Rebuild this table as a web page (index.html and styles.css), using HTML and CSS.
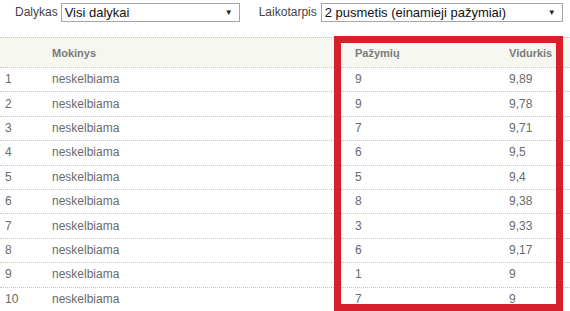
FILE: index.html
```html
<!DOCTYPE html>
<html>
<head>
<meta charset="utf-8">
<link rel="stylesheet" href="styles.css">
</head>
<body>
<div class="filters">
  <label class="flabel">Dalykas</label>
  <div class="select s1"><span>Visi dalykai</span><span class="arrow">▼</span></div>
  <label class="flabel second">Laikotarpis</label>
  <div class="select s2"><span>2 pusmetis (einamieji pažymiai)</span><span class="arrow">▼</span></div>
</div>
<div class="table">
  <div class="row head"><div></div><div>Mokinys</div><div>Pažymių</div><div>Vidurkis</div></div>
  <div class="row"><div>1</div><div>neskelbiama</div><div>9</div><div>9,89</div></div>
  <div class="row"><div>2</div><div>neskelbiama</div><div>9</div><div>9,78</div></div>
  <div class="row"><div>3</div><div>neskelbiama</div><div>7</div><div>9,71</div></div>
  <div class="row"><div>4</div><div>neskelbiama</div><div>6</div><div>9,5</div></div>
  <div class="row"><div>5</div><div>neskelbiama</div><div>5</div><div>9,4</div></div>
  <div class="row"><div>6</div><div>neskelbiama</div><div>8</div><div>9,38</div></div>
  <div class="row"><div>7</div><div>neskelbiama</div><div>3</div><div>9,33</div></div>
  <div class="row"><div>8</div><div>neskelbiama</div><div>6</div><div>9,17</div></div>
  <div class="row"><div>9</div><div>neskelbiama</div><div>1</div><div>9</div></div>
  <div class="row"><div>10</div><div>neskelbiama</div><div>7</div><div>9</div></div>
</div>
<div class="highlight"></div>
</body>
</html>
```
FILE: styles.css
```css
html, body {
  margin: 0;
  padding: 0;
  background: #fff;
  font-family: "Liberation Sans", Arial, sans-serif;
  overflow: hidden;
}
.filters {
  display: flex;
  align-items: center;
  height: 22px;
  padding: 1px 0 0 15px;
}
.flabel {
  font-size: 12px;
  color: #444;
  margin-right: 3px;
}
.flabel.second {
  margin-left: 19px;
  margin-right: 4px;
}
.select {
  box-sizing: border-box;
  height: 19px;
  border: 1px solid #a6a6a6;
  display: flex;
  align-items: center;
  justify-content: space-between;
  padding: 0 6px 0 3px;
  font-size: 13px;
  color: #111;
  background: #fff;
}
.s1 { width: 179px; }
.s2 { width: 242px; }
.arrow {
  font-size: 8px;
  color: #222;
}
.table {
  margin-top: 14px;
}
.row {
  display: grid;
  grid-template-columns: 47px 303px 154px 1fr;
  align-items: center;
  box-sizing: border-box;
  height: 24.4px;
  padding-bottom: 1px;
  border-top: 1px dotted #c4c4c4;
  font-size: 12px;
  color: #6a6a6a;
}
.row > div {
  padding-left: 5px;
}
.row.head {
  height: 30px;
  padding-bottom: 0;
  background: #f7f7f1;
  font-size: 11px;
  font-weight: bold;
  color: #7a7a7a;
}
.highlight {
  position: absolute;
  left: 334px;
  top: 36px;
  width: 229px;
  height: 275px;
  box-sizing: border-box;
  border: 7px solid #d6202b;
}
```
